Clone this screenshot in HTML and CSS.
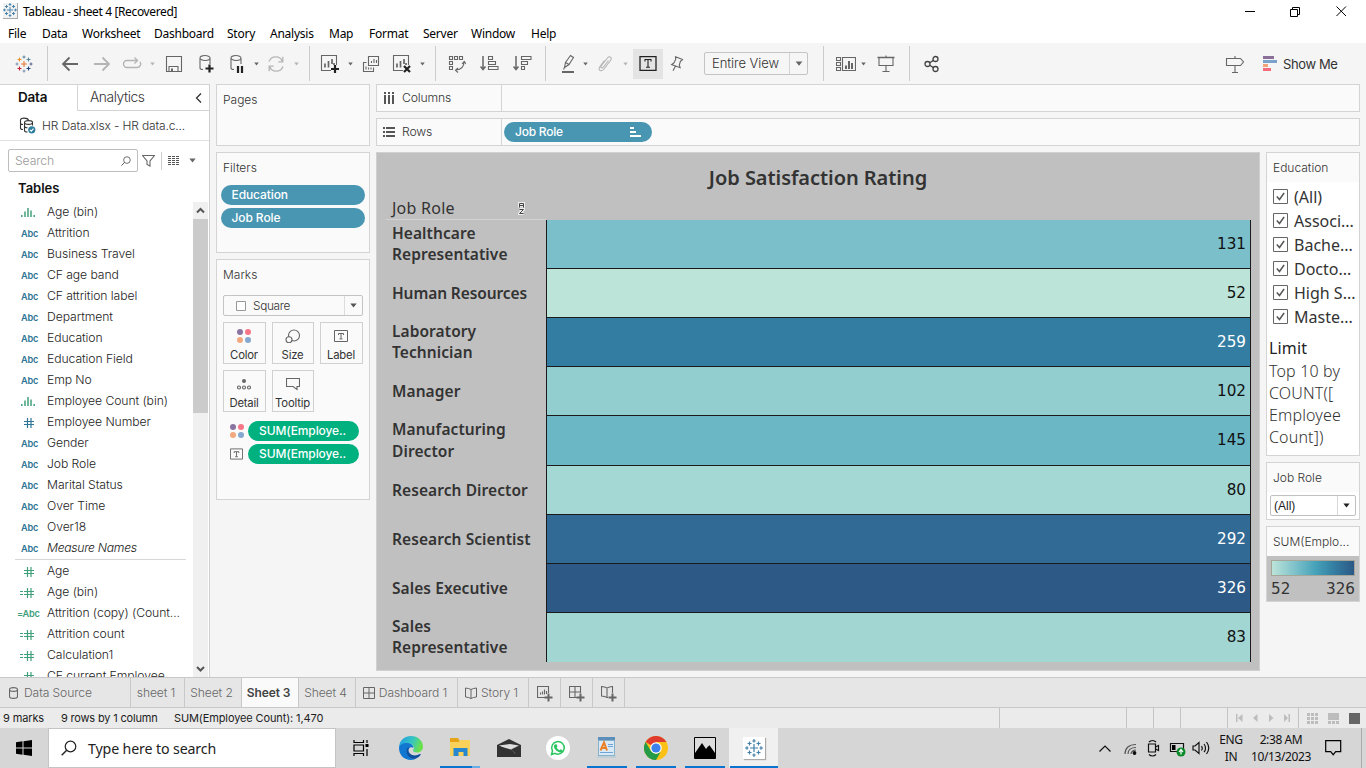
FILE: index.html
```html
<!DOCTYPE html>
<html lang="en">
<head>
<meta charset="utf-8">
<title>Tableau - sheet 4 [Recovered]</title>
<link rel="stylesheet" href="styles.css">
</head>
<body>
<svg class="defs" width="0" height="0">
  <symbol id="i-logo" viewBox="0 0 18 18"><g fill="none" stroke-width="1.1">
    <path stroke="#e8762c" d="M9 6v6M6 9h6"/><path stroke="#5b879b" d="M9 .5v3M7.500 2h3"/><path stroke="#7d93b4" d="M9 14.500v3M7.500 16h3M.5 9h3M2 7.500v3"/><path stroke="#5b6591" d="M14.500 9h3M16 7.500v3"/>
    <path stroke="#eb912c" d="M4.500 2.500v4M2.500 4.500h4"/><path stroke="#59879b" d="M13.500 2.500v4M11.500 4.500h4"/><path stroke="#c72035" d="M4.500 11.500v4M2.500 13.500h4"/><path stroke="#1f457e" d="M13.500 11.500v4M11.500 13.500h4"/></g></symbol>
  <symbol id="i-bluelogo" viewBox="0 0 18 18"><path fill="none" stroke="#427fa9" stroke-width="1.2" d="M9 5v8M5 9h8M9 0v3.500M7.300 2h3.400M9 14.500v3.500M7.300 16h3.400M0 9h3.500M2 7.300v3.400M14.500 9h3.500M16 7.300v3.400M4.500 2.500v4M2.500 4.500h4M13.500 2.500v4M11.500 4.500h4M4.500 11.500v4M2.500 13.500h4M13.500 11.500v4M11.500 13.500h4"/></symbol>
  <symbol id="i-caret" viewBox="0 0 6 4"><path d="M.3 .3h5.400L3 3.700z" fill="currentColor"/></symbol>
  <symbol id="i-hash" viewBox="0 0 10 10"><path fill="none" stroke="currentColor" stroke-width="1.200" d="M3.500 0v10M7 0v10M0 3.500h10M0 6.500h10"/></symbol>
  <symbol id="i-calc" viewBox="0 0 14 10"><path fill="none" stroke="currentColor" stroke-width="1.200" d="M7.500 0v10M11 0v10M4 3.500h10M4 6.500h10M0 3.500h3M0 6.500h3"/></symbol>
  <symbol id="i-bin" viewBox="0 0 14 9"><path fill="none" stroke="currentColor" stroke-width="1.500" d="M.8 7v2M4 3.500v5.500M7 0v9M10 2.500v6.500M13.200 7v2"/></symbol>
  <symbol id="i-t" viewBox="0 0 14 12"><path fill="none" stroke="currentColor" d="M.5 .5h13v11h-13zM4.500 5V3.500h5V5M7 3.500v5.200M5.500 8.900h3"/></symbol>
  <symbol id="i-dots" viewBox="0 0 14 14"><circle cx="3" cy="3" r="3" fill="#8a75a0"/><circle cx="11" cy="3" r="3" fill="#f77789"/><circle cx="3" cy="11" r="3" fill="#f3a87e"/><circle cx="11" cy="11" r="3" fill="#85a8cf"/></symbol>
  <symbol id="i-check" viewBox="0 0 15 15"><path fill="#fff" stroke="#666" d="M.5 .5h14v14h-14z"/><path fill="none" stroke="#555" stroke-width="1.500" d="M3.800 7.500l2.700 3 4.600-6.500"/></symbol>
  <symbol id="i-search" viewBox="0 0 16 16"><circle cx="9.500" cy="6.500" r="5.300" fill="none" stroke="currentColor" stroke-width="1.200"/><path d="M5.700 10.300L.7 15.300" stroke="currentColor" stroke-width="1.400"/></symbol>
  <symbol id="i-book" viewBox="0 0 12 12"><path fill="none" stroke="currentColor" d="M6 2.500L3.500 1.500.5 1v9l3 .5 2.500 1 2.500-1 3-.5V1l-3 .5zM6 2.500v9"/></symbol>
  <symbol id="i-grid" viewBox="0 0 12 12"><path fill="none" stroke="currentColor" d="M.5 .5h11v11H.5zM6 .5v11M.5 6h11"/></symbol>
</svg>

<header class="titlebar">
  <span class="appicon"><svg width="14" height="14"><use href="#i-bluelogo"/></svg></span>
  <span class="title">Tableau - sheet 4 [Recovered]</span>
  <svg class="winbtns" width="106" height="14" fill="none" stroke="#000"><path d="M0 7.500h10M45.500 5.500h7v7h-7zM47.500 5.500v-2h7v7h-2M91.500 2.500l9.500 9.500M101 2.500l-9.500 9.500"/></svg>
</header>
<nav class="menubar"><span class="m1">File</span><span class="m2">Data</span><span class="m3">Worksheet</span><span class="m4">Dashboard</span><span class="m5">Story</span><span class="m6">Analysis</span><span class="m7">Map</span><span class="m8">Format</span><span class="m9">Server</span><span class="m10">Window</span><span class="m11">Help</span></nav>

<div class="toolbar">
  <span class="slot w47"><svg width="18" height="18"><use href="#i-logo"/></svg></span><i class="sep"></i>
  <div class="group g1">
    <span class="slot w32"><svg width="18" height="18" class="ln2"><path d="M17 9H2M8.500 2.500L2 9l6.500 6.500"/></svg></span>
    <span class="slot w32 dim"><svg width="18" height="18" class="ln2"><path d="M1 9h15M9.500 2.500L16 9l-6.500 6.500"/></svg></span>
    <span class="slot w28 dim"><svg width="20" height="16" class="ln"><path stroke-width="1.400" d="M9 4.500H5a3.500 3.500 0 0 0 0 7h10a3.500 3.500 0 0 0 3-5.500M8 4.500h7M12.500 1.500l3 3-3 3"/></svg></span>
    <span class="slot w12 dim"><svg width="5" height="4"><use href="#i-caret"/></svg></span>
    <span class="slot w32"><svg width="18" height="18" class="ln"><path d="M1.500 1.500h15v15h-15zM4 16.500v-5h9v5"/><path d="M7 13.500v3" stroke-width="2"/></svg></span>
    <span class="slot w32"><svg width="18" height="20" class="ln"><path d="M3 4v10c0 1 1 1.500 3 1.500M3 4c0-3.300 10-3.300 10 0s-10 3.300-10 0M13 4v6"/><path class="dk" d="M12.500 10.500v8M8.500 14.500h8"/></svg></span>
    <span class="slot w29"><svg width="18" height="20" class="ln"><path d="M3 4v10c0 1 1 1.500 3 1.500M3 4c0-3.300 10-3.300 10 0s-10 3.300-10 0M13 4v6"/><path class="dk" d="M10 12v7M14 12v7"/></svg></span>
    <span class="slot w10"><svg width="5" height="4"><use href="#i-caret"/></svg></span>
    <span class="slot w30 dim"><svg width="18" height="18" class="ln"><path stroke-width="1.300" d="M2 6.500a7.200 7.200 0 0 1 13.500 0M15.800 1.800v5h-4.500M16 11.500a7.200 7.200 0 0 1-13.500 0M2.200 16.200v-5h4.500"/></svg></span>
    <span class="slot w10 dim"><svg width="5" height="4"><use href="#i-caret"/></svg></span>
  </div><i class="sep"></i>
  <div class="group g2">
    <span class="slot w30"><svg width="20" height="20" class="ln"><path d="M11 16.500H1.500v-15h15V11"/><path stroke-width="1.700" d="M5 9.500v4M8.500 7v6.500M12 5v5M14 9v2"/><path class="dk" d="M15 11v8M11 15h8"/></svg></span>
    <span class="slot w10"><svg width="5" height="4"><use href="#i-caret"/></svg></span>
    <span class="slot w32"><svg width="18" height="18" class="ln"><path d="M6.500 1.500h10v9h-10zM9.500 8V6M12 8V4M14.500 8V5M4.500 7.500h-3v9h10v-4M4 14.500v-3M6.500 14.500v-2M9 14.500v-2"/></svg></span>
    <span class="slot w30"><svg width="20" height="20" class="ln"><path d="M11 16.500H1.500v-15h15V11"/><path stroke-width="1.700" d="M5 9.500v4M8.500 7v6.500M12 5v5M14 9v2"/><path class="dk" d="M12 12l6 6M18 12l-6 6"/></svg></span>
    <span class="slot w10"><svg width="5" height="4"><use href="#i-caret"/></svg></span>
  </div><i class="sep"></i>
  <div class="group g3">
    <span class="slot w32"><svg width="18" height="18" class="ln"><path d="M1.500 1.500h3v3h-3zM6.500 1.500h3v3h-3zM11.500 1.500h3v3h-3zM1.500 6.500h3v3h-3zM1.500 11.500h3v3h-3zM16 7c0 5-3 7.500-8 8M14 9l2.200-2.500L18 9M10 13l-2.500 2.300L10 17.500"/></svg></span>
    <span class="slot w33"><svg width="19" height="18" class="ln"><path stroke-width="1.500" d="M3 1v13M.5 11.500L3 14.500l2.500-3"/><path d="M8.500 1.500h4v3h-4zM8.500 6.500h7v3h-7zM8.500 11.500h9.500v3H8.500z"/></svg></span>
    <span class="slot w32"><svg width="19" height="18" class="ln"><path stroke-width="1.500" d="M3 1v13M.5 11.500L3 14.500l2.500-3"/><path d="M8.500 1.500h9.500v3H8.500zM8.500 6.500h6v3h-6zM8.500 11.500h3v3h-3z"/></svg></span>
  </div><i class="sep"></i>
  <div class="group g4">
    <span class="slot w24"><svg width="14" height="20" class="ln"><path d="M9.500 1.500L4.500 8.500l-1 5 4.500-3L12.500 3.500l-3-2zM4.500 8.500l3.500 2M3.500 13.500l-1 2"/><path stroke-width="2" d="M1 18h12"/></svg></span>
    <span class="slot w10"><svg width="5" height="4"><use href="#i-caret"/></svg></span>
    <span class="slot w30 dim"><svg width="14" height="18" class="ln"><path d="M10.500 5.500l-5 6.500c-1.500 2-3.500.5-2-1.500l6-7.500c2-2.500 5-.5 3 2.500l-6.500 8.500c-3 3.500-6.500 1-4-2.500l4.500-6"/></svg></span>
    <span class="slot w10 dim"><svg width="5" height="4"><use href="#i-caret"/></svg></span>
    <span class="slot w30 active"><svg width="18" height="16" fill="none" stroke="#222"><path stroke-width="1.300" d="M1 .7h16v13.600H1z"/><path d="M6 5.500v-2h6v2M9 3.500v7.500M7 11.200h4" stroke-width="1.100"/></svg></span>
    <span class="slot w28"><svg width="14" height="16" class="ln"><path d="M5.500 .8l7 2.700-1 1.200-1 .3-1.200 4 .8 2.700-8.500-3.200 2.200-1.500 1.900-3.500zM5.500 10L3 14.800"/></svg></span>
    <span class="fit"><b>Entire View</b><i><svg width="8" height="5"><use href="#i-caret"/></svg></i></span>
  </div><i class="sep"></i>
  <div class="group g5">
    <span class="slot w24"><svg width="20" height="16" class="ln"><path d="M.5 1.500h4v3h-4zM.5 6.500h4v3h-4zM.5 11.500h4v3h-4zM6.500 1.500h13v13h-13z"/><path stroke-width="2" d="M10 9.500v3.500M13 5v8M16 7v6"/></svg></span>
    <span class="slot w10"><svg width="5" height="4"><use href="#i-caret"/></svg></span>
    <span class="slot w36"><svg width="18" height="18" class="ln"><path stroke-width="1.500" d="M.5 2.500h17"/><path d="M2 2.500v8h14v-8M9 10.500v6M5.500 16.500h7M9 .5v2"/></svg></span>
  </div><i class="sep"></i>
  <span class="slot w32 share"><svg width="16" height="18" fill="none" stroke="#444" stroke-width="1.300"><circle cx="3.500" cy="9" r="2.500"/><circle cx="11.500" cy="4" r="2.500"/><circle cx="11.500" cy="14" r="2.500"/><path d="M5.700 7.700l3.700-2.300M5.700 10.300l3.700 2.300"/></svg></span>
  <span class="slot w32 guide"><svg width="20" height="20" class="ln"><path d="M1.500 4.500h14l3 3.500-3 3.500h-14zM10 2v2.500M10 11.500v6.500M7 18.500h6"/></svg></span>
  <span class="showme"><svg width="14" height="16"><path fill="#8a7099" d="M0 0h11v3H0z"/><path fill="#7ba2cc" d="M0 4h14v3H0z"/><path fill="#f3a37a" d="M0 8h5v3H0z"/><path fill="#f66c7f" d="M0 12h8v3H0z"/></svg>Show Me</span>
</div>

<main class="work">
  <aside class="side">
    <div class="sidetabs"><span class="on">Data</span><span class="off">Analytics<svg width="7" height="10" class="ln2"><path d="M6 .5L1.500 5 6 9.500"/></svg></span></div>
    <div class="source"><svg width="17" height="17" class="ln"><path d="M1.500 3v8c0 1 1 1.500 2.500 1.500M1.500 3c0-2.500 7-2.500 8 0M1.500 6c0 1 1 1.500 2.500 1.500"/><path d="M5.500 5.500v8c0 1 1 1.500 3 1.500M5.500 5.500c0-2.500 8-2.500 8 0s-8 2.500-8 0M13.500 5.500v3M5.500 9c0 1.200 1.500 1.800 3 1.800"/><circle cx="12.800" cy="12.800" r="3.600" fill="#2f7e9f" stroke="none"/><path stroke="#fff" d="M11 12.800l1.300 1.300 2.200-2.400"/></svg><span>HR Data.xlsx - HR data.c...</span></div>
    <div class="finder"><span class="box">Search<svg width="10" height="10"><use href="#i-search"/></svg></span><svg width="13" height="14" class="ln"><path d="M.5 1.500h12L8 7v5l-3-1.500V7z"/></svg><i></i><svg width="12" height="10"><path fill="none" stroke="#555" stroke-width="1" stroke-dasharray="3 1" d="M0 .5h12M0 2.500h12M0 4.500h12M0 6.500h12M0 8.500h12"/></svg><svg class="cr" width="7" height="5"><use href="#i-caret"/></svg></div>
    <h2>Tables</h2>
    <div class="fieldwrap">
      <ul class="fields">
        <li><em class="gr"><svg width="14" height="9"><use href="#i-bin"/></svg></em>Age (bin)</li>
        <li><em>Abc</em>Attrition</li>
        <li><em>Abc</em>Business Travel</li>
        <li><em>Abc</em>CF age band</li>
        <li><em>Abc</em>CF attrition label</li>
        <li><em>Abc</em>Department</li>
        <li><em>Abc</em>Education</li>
        <li><em>Abc</em>Education Field</li>
        <li><em>Abc</em>Emp No</li>
        <li><em class="gr"><svg width="14" height="9"><use href="#i-bin"/></svg></em>Employee Count (bin)</li>
        <li><em><svg width="10" height="10"><use href="#i-hash"/></svg></em>Employee Number</li>
        <li><em>Abc</em>Gender</li>
        <li><em>Abc</em>Job Role</li>
        <li><em>Abc</em>Marital Status</li>
        <li><em>Abc</em>Over Time</li>
        <li><em>Abc</em>Over18</li>
        <li class="it"><em>Abc</em>Measure Names</li>
        <li class="rule"></li>
        <li><em class="gr"><svg width="10" height="10"><use href="#i-hash"/></svg></em>Age</li>
        <li><em class="gr calc"><svg width="14" height="10"><use href="#i-calc"/></svg></em>Age (bin)</li>
        <li><em class="gr calc">=Abc</em>Attrition (copy) (Count...</li>
        <li><em class="gr calc"><svg width="14" height="10"><use href="#i-calc"/></svg></em>Attrition count</li>
        <li><em class="gr calc"><svg width="14" height="10"><use href="#i-calc"/></svg></em>Calculation1</li>
        <li><em class="gr"><svg width="10" height="10"><use href="#i-hash"/></svg></em>CF current Employee</li>
      </ul>
      <div class="scroll"><svg width="15" height="17" class="arrow"><path d="M4 10.500L7.500 7l3.500 3.500"/></svg><i></i><svg width="15" height="17" class="arrow"><path d="M4 7l3.500 3.500L11 7"/></svg></div>
    </div>
  </aside>

  <section class="cards">
    <div class="card pages"><h3>Pages</h3></div>
    <div class="card filters"><h3>Filters</h3><span class="pill">Education</span><span class="pill">Job Role</span></div>
    <div class="card marks"><h3>Marks</h3>
      <div class="marktype"><svg width="10" height="10"><path fill="#fff" stroke="#999" d="M.5 .5h9v9h-9z"/></svg><span>Square</span><i><svg width="7" height="5"><use href="#i-caret"/></svg></i></div>
      <div class="markbtns">
        <span><svg width="14" height="14"><use href="#i-dots"/></svg>Color</span>
        <span><svg width="16" height="14" class="ln"><circle cx="9" cy="6.500" r="5.500"/><circle cx="4" cy="10.700" r="3" fill="#fafafa"/></svg>Size</span>
        <span><svg width="14" height="14" viewBox="0 -1 14 14"><use href="#i-t" width="14" height="12"/></svg>Label</span>
        <span><svg width="14" height="14"><circle cx="7" cy="4" r="2" fill="#666"/><g class="ln"><circle cx="2" cy="10.500" r="1.500"/><circle cx="7" cy="10.500" r="1.500"/><circle cx="12" cy="10.500" r="1.500"/></g></svg>Detail</span>
        <span><svg width="14" height="14" class="ln"><path d="M.5 1.500h13v8H11v3l-4-3H.5z"/></svg>Tooltip</span>
      </div>
      <div class="enc"><svg width="14" height="14"><use href="#i-dots"/></svg><span class="pill green">SUM(Employe..</span></div>
      <div class="enc"><svg width="13" height="12"><use href="#i-t"/></svg><span class="pill green">SUM(Employe..</span></div>
    </div>
  </section>

  <section class="view">
    <div class="shelf"><label><svg width="12" height="12"><path fill="none" stroke="#555" stroke-width="2" d="M2 0v2M6 0v2M10 0v2M2 3v9M6 3v9M10 3v9"/></svg>Columns</label></div>
    <div class="shelf"><label><svg width="12" height="12"><path fill="none" stroke="#555" stroke-width="2" d="M0 2h2M0 6h2M0 10h2M3 2h9M3 6h9M3 10h9"/></svg>Rows</label><span class="pill">Job Role<svg width="11" height="10"><path fill="#fff" d="M0 0h4v2H0zM0 4h6v2H0zM0 8h11v2H0z"/></svg></span></div>
    <div class="canvasrow">
      <div class="sheet">
        <h1>Job Satisfaction Rating</h1>
        <div class="colhead"><span>Job Role</span><svg width="7" height="13"><path fill="none" stroke="#eee" stroke-width="3" d="M1.500 5.500V1.500h4v4M1.500 3.500h4M1.500 7.500h4l-4 4h4"/><path fill="none" stroke="#444" d="M1.500 5.500V1.500h4v4M1.500 3.500h4M1.500 7.500h4l-4 4h4"/></svg></div>
        <div class="table">
          <div class="names"><span class="two">Healthcare Representative</span><span>Human Resources</span><span class="two">Laboratory Technician</span><span>Manager</span><span class="two tall">Manufacturing Director</span><span>Research Director</span><span>Research Scientist</span><span>Sales Executive</span><span class="two">Sales Representative</span></div>
          <div class="cells"><span class="c131">131</span><span class="c52">52</span><span class="c259 lt">259</span><span class="c102">102</span><span class="c145 tall">145</span><span class="c80">80</span><span class="c292 lt">292</span><span class="c326 lt">326</span><span class="c83">83</span></div>
        </div>
      </div>
      <div class="legends">
        <div class="card edu"><h3>Education</h3>
          <div class="opts"><span><svg width="15" height="15"><use href="#i-check"/></svg>(All)</span><span><svg width="15" height="15"><use href="#i-check"/></svg>Associ...</span><span><svg width="15" height="15"><use href="#i-check"/></svg>Bache...</span><span><svg width="15" height="15"><use href="#i-check"/></svg>Docto...</span><span><svg width="15" height="15"><use href="#i-check"/></svg>High S...</span><span><svg width="15" height="15"><use href="#i-check"/></svg>Maste...</span></div>
          <div class="limit"><b>Limit</b>Top 10 by<br>COUNT([<br>Employee<br>Count])</div>
        </div>
        <div class="card role"><h3>Job Role</h3><div class="sel"><span>(All)</span><i><svg width="7" height="5"><use href="#i-caret"/></svg></i></div></div>
        <div class="card ramp"><h3>SUM(Emplo...</h3><div class="rampbody"><div class="grad"></div><p><span>52</span><span>326</span></p></div></div>
      </div>
    </div>
  </section>
</main>

<nav class="tabs">
  <span class="t1"><svg width="9" height="12" class="ln"><path d="M.5 2.500v7c0 2.500 8 2.500 8 0v-7c0-2.500-8-2.500-8 0s8 2.500 8 0"/></svg><u>Data Source</u></span>
  <span class="t2">sheet 1</span><span class="t3">Sheet 2</span><span class="t4">Sheet 3</span><span class="t5">Sheet 4</span>
  <span class="t6"><svg width="12" height="12" class="c6"><use href="#i-grid"/></svg><u>Dashboard 1</u></span>
  <span class="t7"><svg width="12" height="12" class="c6"><use href="#i-book"/></svg><u>Story 1</u></span>
  <span class="t8"><svg width="16" height="16" class="ln"><path d="M8 11.500H.5v-11h11V7M3.500 8.500v-2M5.500 8.500v-3M7.500 8.500v-5M9.500 8v-3"/><path stroke-width="2" d="M11.500 7.500v8M7.500 11.500h8"/></svg></span>
  <span class="t8"><svg width="16" height="16" class="ln"><path d="M8 11.500H.5v-11h11V7M6 .5v11M.5 6h11"/><path stroke-width="2" d="M11.500 7.500v8M7.500 11.500h8"/></svg></span>
  <span class="t8"><svg width="16" height="16" class="ln"><path d="M7 11.500l-1 0-2.500-1-3-.5V.5l3 .5L6 2l2.500-1 3-.5V7M6 2v9.500"/><path stroke-width="2" d="M11.500 7.500v8M7.500 11.500h8"/></svg></span>
</nav>
<div class="status">
  <span class="s1">9 marks</span><span class="s2">9 rows by 1 column</span><span class="s3">SUM(Employee Count): 1,470</span>
  <div class="scells"><i class="a"></i><i class="b"></i><i class="b"></i><i class="c"></i>
    <i class="d"><svg width="54" height="8" fill="#bdbdbd"><path d="M0 0h1.500v8H0zM6.500 0v8L2 4zM21.500 0v8L17 4zM33 0l4.500 4L33 8zM48 0l4 4-4 4zM52.500 0H54v8h-1.500z"/></svg></i>
    <i class="e"><svg width="54" height="11"><path fill="#bdbdbd" d="M0 0h3v3H0zM4 0h3v3H4zM8 0h3v3H8zM0 4h3v3H0zM4 4h3v3H4zM8 4h3v3H8zM0 8h3v3H0zM4 8h3v3H4zM8 8h3v3H8zM21 0h11v7H21zM21 8h3v3h-3zM25 8h3v3h-3zM29 8h3v3h-3z"/><path fill="#666" d="M42 0h11v11H42z"/></svg></i>
  </div>
</div>

<footer class="taskbar">
  <span class="start"><svg width="16" height="16"><path d="M0 2.200L6.500 1.300V7.500H0zM7.500 1.200L16 0v7.500H7.500zM0 8.500h6.500v6.200L0 13.800zM7.500 8.500H16V16l-8.500-1.200z"/></svg></span>
  <span class="tsearch"><svg width="16" height="16"><use href="#i-search"/></svg>Type here to search</span>
  <span class="app taskv"><svg width="17" height="16" fill="none" stroke="#000" stroke-width="1.200"><path d="M1 0v2.500h9.500V0M1 5h9.500v6H1zM1 16v-2.500h9.500V16M14 0v3M14 9v7"/><path fill="#000" stroke="none" d="M12.500 4h3v3h-3z"/></svg></span>
  <span class="app"><svg width="24" height="24" viewBox="0 0 24 24"><defs><linearGradient id="eg" x1="0" y1="0" x2="1" y2=".3"><stop offset=".1" stop-color="#249fe0"/><stop offset=".6" stop-color="#37c7c0"/><stop offset="1" stop-color="#6be04c"/></linearGradient></defs><path fill="url(#eg)" d="M0 12C0 4 6 0 12 0c7 0 12 5 12 10.500 0 4-3 6-6 6-2.500 0-4-1-4-2 0-.7.900-1 .9-2.500C15 9.500 12 7.500 8.500 7.500 4 7.500 0 10 0 12z"/><path fill="#1277d1" d="M0 12c0-3 4-5 8-5 4 0 6.500 2.500 6.500 5-2.500-2-6 .5-6 4 0 4 4.500 7.500 9.500 6-1.800 1.300-3.700 2-6 2C5 24 0 19 0 12z"/><path fill="#0e4f9e" d="M8.500 11.800C6 16.500 9 23 16 22.700c2.500-.7 4.500-2 5.800-4.200.3-.6-.2-.7-.8-.4-6 3-11.500.400-11.500-4 0-1 .4-1.800 1-2.500z"/></svg></span>
  <span class="app run multi"><svg width="22" height="20"><path fill="#e7a417" d="M1 0h8l1.500 2.500V6H1z"/><path fill="#fad15a" d="M1 4h9l1.500-2H21v16H1z"/><path fill="#2888cf" d="M4.500 18v-8h14v8h-4v-4h-5v4z"/></svg></span>
  <span class="app"><svg width="24" height="20"><path fill="#333" d="M0 7l12-6 12 6v12H0z"/><path fill="#ddd" d="M2 7.500L13 6l9 1.500-8 4 5 4.500z"/><path fill="#333" d="M0 7.500l14 4 5 4.500L0 11z"/></svg></span>
  <span class="app"><svg width="24" height="24"><circle cx="12" cy="12" r="12" fill="#fff"/><path fill="none" stroke="#29c55f" stroke-width="1.500" d="M5.500 18.500l1-3.500a6.300 6.300 0 1 1 2.500 2.400z"/><path fill="#29c55f" d="M9.500 8.200l1.300.2.700 2-.8 1c.8 1.500 1.700 2.200 3 2.800l1-1 2 1c-.2 2-2 2.500-3.500 2-3-1-5.500-4-5.300-6.200.1-.8.800-1.700 1.600-1.800z"/></svg></span>
  <span class="app run"><svg width="20" height="22"><path fill="#89b0cb" d="M1 1h17v18H1z"/><path fill="#d9eaf6" d="M2 4h15v14H2z"/><path fill="#5b8fb9" d="M1 0h17v3H1z"/><path fill="none" stroke="#6da6d6" d="M11 7.500h5M11 9.500h5M3 15.500h13"/><path fill="none" stroke="#eb8125" stroke-width="2" d="M3.500 13.500L7 5.500l3 8M5 11h4"/><path fill="#bfcfd8" d="M0 19h19v2H0z"/></svg></span>
  <span class="app run"><svg width="24" height="24"><circle cx="12" cy="12" r="12" fill="#fbc116"/><path fill="#df3b2e" d="M12 12L1.600 6A12 12 0 0 1 22.400 6H12z"/><path fill="#259b48" d="M12 24A12 12 0 0 1 1.600 6L7 15l5 3 4.500-2z"/><circle cx="12" cy="12" r="5.800" fill="#fff"/><circle cx="12" cy="12" r="4.600" fill="#3b82ef"/></svg></span>
  <span class="app run"><svg width="22" height="22"><path fill="#ddd" stroke="#000" d="M.5 .5h21v21H.5z"/><path d="M1 16l7-10 4 6 1.500-2 2-1.800L21 16v5.500H1z"/></svg></span>
  <span class="app run cur"><b><svg width="18" height="18"><use href="#i-bluelogo"/></svg></b></span>
  <div class="tray">
    <svg class="trayicons" width="112" height="18" fill="none" stroke="#111" stroke-width="1.200"><path d="M.5 12.500L6 7l5.500 5.500"/><path d="M26 15c0-6 4-9.500 11-9.500M29 15c0-4 3-6.500 8-6.500M32 15c0-2 2-4 5-4" stroke="#555"/><circle cx="35.500" cy="14" r="1.300" fill="#000"/><path d="M49.500 5h7v8h-7zM56.500 8l3-1.500v5L56.500 10M50 3c2-2 5-2 7 0M50 15.500c2 2 5 2 7 0"/><path d="M71.500 4.500h13v8h-13z"/><path fill="#000" stroke="none" d="M73 6h3.500v5H73z"/><circle cx="82" cy="13" r="4.500" fill="#0b8a2a" stroke="none"/><path stroke="#fff" d="M82 10.500v5M80 13l2-2.500 2 2.500"/><path d="M94 7h2l4-3.500v11L96 11h-2zM102.500 7c1 1.500 1 3 0 4.500M105 5c2 2.500 2 6 0 8M107.500 3c3 4 3 8 0 12"/></svg>
    <span class="lang">ENG<br>IN</span><span class="clock">2:38 AM<br>10/13/2023</span>
    <svg class="note" width="17" height="16" fill="none" stroke="#000" stroke-width="1.200"><path d="M.7 .7h15v11h-5l-2.500 3-2.500-3h-5z"/></svg>
    <i class="desk"></i>
  </div>
</footer>
</body>
</html>
```
FILE: styles.css
```css
* { box-sizing: border-box; }
body { margin: 0; width: 1366px; height: 768px; overflow: hidden; display: flex; flex-direction: column; background: #f5f5f5; font: 12.5px "Inter", "Noto Sans", sans-serif; color: #333; white-space: nowrap; }
h1, h2, h3, p, ul { margin: 0; padding: 0; font-weight: 400; }
i, em, u { font-style: normal; text-decoration: none; }
svg { display: block; flex: none; }
.defs { position: absolute; }
.ln { fill: none; stroke: currentColor; stroke-width: 1.1; }
.ln2 { fill: none; stroke: currentColor; stroke-width: 1.8; }
.dk { stroke: #222; stroke-width: 2.2; }
.c6 { color: #666; }

.titlebar { height: 24px; flex: none; background: #fff; display: flex; align-items: center; font: 12px "Noto Sans", sans-serif; color: #000; padding-left: 3px; }
.appicon { width: 15px; height: 16px; margin-top: -2px; border-right: 1px solid #aaa; border-bottom: 1px solid #aaa; background: #f2f2f2; }
.title { margin-left: 5px; margin-top: -1px; letter-spacing: -.37px; }
.winbtns { margin-left: auto; margin-right: 15px; margin-top: -3px; }
.menubar { height: 19px; flex: none; background: #fff; display: flex; align-items: center; padding-left: 8px; font: 12px "Noto Sans", sans-serif; color: #000; letter-spacing: -.25px; }
.menubar span { line-height: 19px; flex: none; }
.m1 { width: 34px; } .m2 { width: 40px; } .m3 { width: 72px; } .m4 { width: 73px; } .m5 { width: 43px; } .m6 { width: 59px; } .m7 { width: 40px; } .m8 { width: 54px; } .m9 { width: 48px; } .m10 { width: 60px; }

.toolbar { height: 41px; flex: none; display: flex; align-items: center; color: #666; }
.group { display: flex; align-items: center; height: 41px; }
.sep { width: 1px; height: 35px; background: #ccc; }
.slot { display: flex; align-items: center; justify-content: center; height: 30px; flex: none; }
.dim { color: #b5b5b5; }
.w10 { width: 10px; } .w12 { width: 12px; } .w24 { width: 24px; } .w28 { width: 28px; } .w29 { width: 29px; } .w30 { width: 30px; } .w32 { width: 32px; } .w33 { width: 33px; } .w36 { width: 36px; } .w47 { width: 47px; }
.g1 { padding: 0 8px 0 6px; } .g2 { padding: 0 8px 0 5px; } .g3 { padding: 0 7px 0 5px; } .g4 { padding: 0 15px 0 10px; } .g5 { padding: 0 5px 0 10px; }
.active { background: #e4e4e4; margin-left: 3px; }
.fit { display: flex; width: 104px; height: 23px; border: 1px solid #c4c4c4; border-radius: 2px; margin-left: 13px; background: #f6f6f6; }
.fit b { flex: 1; font: 300 13px/21px "Inter"; letter-spacing: -.05px; color: #333; padding-left: 7px; }
.fit i { width: 18px; border-left: 1px solid #d4d4d4; display: flex; align-items: center; justify-content: center; }
.share { margin-left: 6px; }
.guide { margin-left: auto; }
.showme { display: flex; align-items: center; gap: 6px; width: 103px; margin-left: 12px; font-size: 13px; letter-spacing: -.4px; color: #333; }

.work { height: 593px; flex: none; display: flex; }
.side { width: 210px; border-right: 1px solid #d0d0d0; background: #fff; display: flex; flex-direction: column; }
.sidetabs { display: flex; height: 27px; border-top: 1px solid #d4d4d4; font-size: 14px; line-height: 25px; }
.on { width: 77px; padding-left: 18px; font-weight: 600; font-size: 13.5px; letter-spacing: -.2px; color: #111; }
.off { flex: 1; display: flex; align-items: center; justify-content: space-between; border-left: 1px solid #d4d4d4; border-bottom: 1px solid #d4d4d4; padding: 0 7px 0 12px; font-weight: 300; font-size: 13.8px; letter-spacing: -.42px; }
.off svg { stroke-width: 1.3; }
.source { height: 30px; border-bottom: 1px solid #e0e0e0; display: flex; align-items: center; gap: 6px; padding: 0 0 1px 19px; font-weight: 300; font-size: 12px; letter-spacing: -.14px; color: #333; }
.finder { height: 39px; display: flex; align-items: center; padding-left: 8px; color: #666; }
.box { width: 130px; height: 23px; border: 1px solid #bdbdbd; border-radius: 2px; display: flex; align-items: center; justify-content: space-between; padding: 0 6px; color: #999; font-weight: 300; font-size: 12.2px; letter-spacing: -.1px; margin-right: 4px; }
.box svg { color: #444; }
.finder i { width: 1px; height: 18px; background: #ccc; margin: 0 6px; }
.cr { margin-left: 9px; }
h2 { height: 21px; line-height: 16px; padding-left: 18px; font-size: 13px; font-weight: 600; color: #111; }
.fieldwrap { flex: 1; min-height: 0; overflow: hidden; display: flex; }
.fields { width: 193px; list-style: none; overflow: hidden; }
.fields li { height: 21px; line-height: 21px; display: flex; align-items: center; padding-left: 21px; font-weight: 300; font-size: 12.2px; letter-spacing: -.08px; color: #222; }
.fields em { width: 26px; flex: none; color: #2f7595; font: 600 9.2px "Inter"; letter-spacing: -.25px; display: flex; padding-top: 2px; }
.fields em.gr { color: #41a07b; }
.fields em svg[width="10"] { margin-left: 3px; }
.fields em.calc { margin-left: -4px; width: 30px; }
.fields em.calc svg { margin-left: 3px; }
.fields li.it { font-style: italic; letter-spacing: -.3px; }
.fields li.rule { height: 2px; margin: 0 7px 0 15px; padding: 0; border-bottom: 1px solid #d8d8d8; }
.scroll { width: 15px; margin-top: 1px; background: #f0f0f0; display: flex; flex-direction: column; }
.scroll i { height: 194px; background: #cbcbcb; margin-bottom: auto; }
.arrow { fill: none; stroke: #555; stroke-width: 2; }

.cards { width: 160px; padding-left: 6px; display: flex; flex-direction: column; gap: 6px; }
.card { border: 1px solid #d4d4d4; background: #fafafa; }
h3 { font: 300 12px/30px "Inter"; color: #333; padding-left: 6px; }
.cards .card { display: flex; flex-direction: column; }
.pages { height: 62px; } .filters { height: 101px; } .marks { height: 241px; }
.filters .pill { margin: 0 4px 3px; padding-left: 10.5px; }
.filters h3 { height: 32px; }
.pill { height: 20px; line-height: 20px; border-radius: 10px; background: #4996b2; color: #fff; padding: 0 11px; font-size: 12px; font-weight: 500; letter-spacing: -.1px; }
.marktype { height: 21px; margin: 5px 6px 6px; border: 1px solid #c4c4c4; border-radius: 2px; display: flex; align-items: center; padding-left: 12px; gap: 7px; font-weight: 300; font-size: 11.8px; letter-spacing: -.3px; }
.marktype i { margin-left: auto; width: 18px; height: 19px; border-left: 1px solid #ddd; display: flex; align-items: center; justify-content: center; color: #555; }
.markbtns { display: grid; grid-template-columns: 43px 42px 43px; gap: 6px; padding-left: 6px; color: #666; }
.markbtns span { height: 42px; border: 1px solid #d0d0d0; display: flex; flex-direction: column; align-items: center; gap: 4px; padding: 6px 1px 0 0; font-size: 11.3px; letter-spacing: -.2px; line-height: 17px; color: #333; }
.markbtns svg { color: #666; }
.enc { display: flex; align-items: center; height: 20px; margin: 9px 0 0 13px; color: #666; }
.enc + .enc { margin-top: 3px; }
.green { background: #00b180; width: 111px; margin-left: 4px; padding: 0 11px; }
.enc svg[width="13"] { margin-right: 1px; }

.view { width: 990px; padding-left: 6px; display: flex; flex-direction: column; gap: 6px; }
.shelf { height: 28px; border: 1px solid #d4d4d4; background: #fafafa; display: flex; align-items: center; }
.shelf label { width: 125px; height: 26px; border-right: 1px solid #d4d4d4; display: flex; align-items: center; gap: 7px; padding: 0 0 1px 6px; font-weight: 300; font-size: 12.2px; letter-spacing: -.15px; }
.shelf .pill { width: 148px; margin-left: 2px; display: flex; justify-content: space-between; align-items: center; letter-spacing: -.25px; }
.canvasrow { display: flex; gap: 6px; height: 519px; }
.sheet { width: 884px; border: 1px solid #d0d0d0; background: #c0c0c0; font-family: "Noto Sans"; color: #333; }
h1 { font-size: 20px; font-weight: 600; text-align: center; height: 45px; line-height: 49px; letter-spacing: -.05px; }
.colhead { margin-left: 9px; width: 160px; height: 22px; border-bottom: 1px solid #d2d2d2; display: flex; justify-content: space-between; align-items: center; padding: 0 21px 1px 6px; font-size: 16px; letter-spacing: .25px; line-height: 18px; }
.table { display: flex; height: 442px; margin-left: 15px; }
.names { width: 154px; display: flex; flex-direction: column; }
.names span { height: 49px; display: flex; align-items: center; white-space: normal; font-size: 15.5px; line-height: 21.5px; font-weight: 600; padding: 1px 4px 0 0; letter-spacing: .08px; }
.names .two { padding: 0 4px 1px 0; }
.names span:nth-child(2) { letter-spacing: -.1px; }
.cells { width: 705px; border: 1px solid #1a1a1a; border-width: 0 1px; }
.cells span { display: block; height: 49px; border-bottom: 1px solid #1a1a1a; text-align: right; padding-right: 4px; font: 15.2px/48px "DejaVu Sans", sans-serif; color: #111; }
.cells .tall, .names .tall { height: 50px; }
.cells .lt { color: #fff; }
.cells span:last-child { border-bottom: 0; }
.c131 { background: #7abfca; } .c52 { background: #bce4d8; } .c259 { background: #347da2; } .c102 { background: #92cdcf; } .c145 { background: #6cb7c6; } .c80 { background: #a4d8d4; } .c292 { background: #306a95; } .c326 { background: #2c5985; } .c83 { background: #a1d6d3; }
.legends { width: 94px; display: flex; flex-direction: column; gap: 6px; }
.legends .card { background: #fff; }
.legends h3 { background: #fafafa; line-height: 29px; height: 29px; }
.edu { height: 304px; } .role { height: 58px; } .ramp { height: 76px; }
.opts { padding-top: 3px; }
.opts span { display: flex; gap: 6px; align-items: center; height: 24px; padding: 0 0 1px 6px; font: 16px "Noto Sans"; letter-spacing: 0; color: #333; }
.limit { padding: 8px 0 0 2px; font: 300 16px/22px "Noto Sans"; letter-spacing: .15px; color: #333; }
.limit b { display: block; height: 23px; font-weight: 400; color: #222; }
.sel { margin: 3px 3px 0; width: 86px; height: 21px; border: 1px solid #c0c0c0; border-radius: 2px; display: flex; font: 12px/20px "Liberation Sans"; color: #222; }
.sel span { flex: 1; padding-left: 3px; }
.sel i { width: 18px; border-left: 1px solid #d8d8d8; display: flex; align-items: center; justify-content: center; }
.rampbody { height: 45px; background: #c0c0c0; padding: 4px 4px 0; }
.grad { height: 16px; border: 1px solid #a5a59a; background: linear-gradient(90deg, #bce4d8, #7abfca 30%, #45a2b9 53%, #347da2 76%, #2c5985); }
.rampbody p { display: flex; justify-content: space-between; font: 15.2px/26px "DejaVu Sans"; }

.tabs { height: 31px; flex: none; background: #e6e6e6; border-top: 1px solid #c8c8c8; border-bottom: 1px solid #c8c8c8; display: flex; color: #666; font-weight: 300; font-size: 12.1px; letter-spacing: -.1px; }
.tabs span { border-right: 1px solid #c8c8c8; display: flex; align-items: center; justify-content: center; gap: 4px; padding-right: 3px; }
.t1 { width: 131px; } .tabs .t1 { justify-content: flex-start; padding-left: 9px; gap: 6px; }
.t2 { width: 54px; } .t3 { width: 57px; } .t4 { width: 57px; background: #fafafa; font-weight: 600; color: #444; font-size: 12px; } .t5 { width: 57px; } .t6 { width: 102px; } .t7 { width: 71px; } .t8 { width: 32px; }
.tabs .t8 { padding: 2px 0 0; }
.status { height: 20px; flex: none; background: #ebebeb; display: flex; align-items: center; font-size: 11px; letter-spacing: -.12px; color: #222; padding-left: 3px; line-height: 20px; }
.s1 { width: 58px; } .s2 { width: 113px; letter-spacing: -.18px; }
.scells { margin-left: auto; width: 367px; height: 20px; display: flex; }
.scells i { border-left: 1px solid #c4c4c4; display: flex; align-items: center; height: 20px; }
.scells .a { width: 127px; } .scells .b { width: 27px; } .scells .c { width: 47px; } .scells .d { width: 71px; padding-left: 8px; } .scells .e { width: 68px; padding-left: 8px; }

.taskbar { height: 40px; flex: none; background: #d6d6d6; display: flex; font-family: "Noto Sans"; color: #111; }
.start { width: 48px; display: flex; align-items: center; justify-content: center; }
.tsearch { width: 288px; border: 1px solid #c4c4c4; background: #fff; display: flex; align-items: center; padding-left: 12px; gap: 11px; font-size: 14.2px; letter-spacing: -.13px; color: #222; }
.app { width: 49px; display: flex; align-items: center; justify-content: center; }
.taskv { width: 50px; }
.run { background: linear-gradient(#0a74cf, #0a74cf) center bottom / 40px 2px no-repeat; }
.multi { background-image: linear-gradient(90deg, #0a74cf 80%, #6aaee6 80%); }
.cur { background: linear-gradient(#0a74cf, #0a74cf) center bottom / 48px 2px no-repeat, #f0f0f0; }
.cur b { background: #fff; width: 22px; height: 22px; display: flex; align-items: center; justify-content: center; box-shadow: 1px 1px 1px #aaa; }
.tray { margin-left: auto; display: flex; align-items: center; text-align: center; font-size: 12px; line-height: 17.5px; }
.trayicons { margin-right: 3px; }
.lang { width: 34px; letter-spacing: -.35px; }
.clock { width: 62px; margin-left: 2px; letter-spacing: -.4px; }
.note { margin: 0 19px 0 13px; }
.desk { width: 1px; height: 40px; background: #aaa; margin-right: 4px; }
```
